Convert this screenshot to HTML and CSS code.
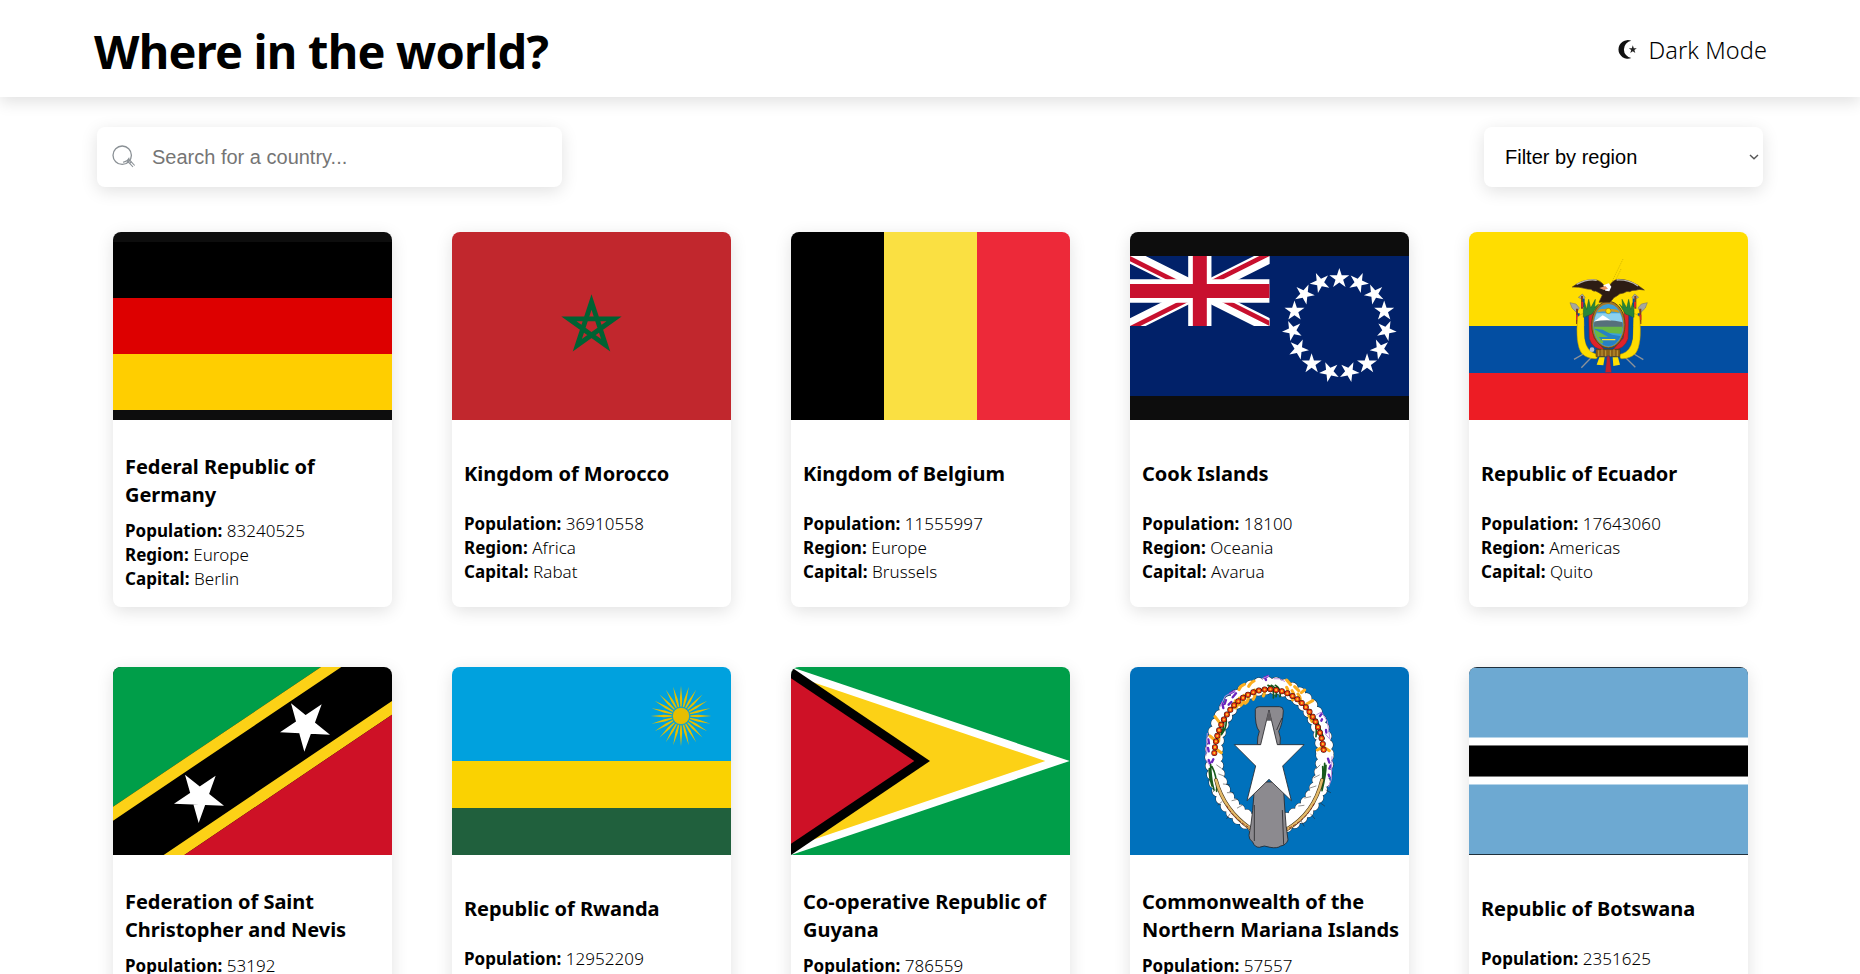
FILE: index.html
```html
<!DOCTYPE html>
<html lang="en">
<head>
<meta charset="utf-8">
<title>Where in the world?</title>
<link rel="stylesheet" href="styles.css">
</head>
<body>
<header class="header">
  <h1 class="brand">Where in the world?</h1>
  <button class="mode" type="button">
    <svg class="mode-icon" viewBox="0 0 20 20"><path d="M13.300 .8A9.300 9.300 0 1 0 13.300 18A8.700 8.700 0 0 1 13.300 .8Z" fill="#111"/><path d="M13.300 .8A9.300 9.300 0 1 0 13.300 18L12.900 17A7.900 7.900 0 1 1 12.900 1.800Z" fill="none"/><path d="M14.800 5.300l1 2.900h3l-2.400 1.800.9 2.900-2.500-1.700-2.500 1.700.9-2.900-2.400-1.800h3z" fill="#222" stroke="#fff" stroke-width=".8" paint-order="stroke"/></svg>
    <span>Dark Mode</span>
  </button>
</header>
<section class="controls">
  <label class="search">
    <svg class="search-icon" viewBox="0 0 24 24" fill="none" stroke="#8a9095"><circle cx="10.2" cy="10.2" r="9.2" stroke-width="1.3"/><path d="M11 17.2Q15.500 16.500 17.300 12.800M15.500 16.200l1.600-1.600 2.200 2.200-1.600 1.600zM17.700 18.400l3.300 3.600M19.300 16.800l3.400 3.700" stroke-width="1.100"/></svg>
    <input class="search-input" type="text" placeholder="Search for a country...">
  </label>
  <div class="region"><span>Filter by region</span><svg class="chevron" viewBox="0 0 10 6" fill="none" stroke="#555" stroke-width="1.4"><path d="M1 1l4 3.800L9 1"/></svg></div>
</section>
<main class="grid">
  <article class="card">
    <svg class="flag" viewBox="39 36 837 564" preserveAspectRatio="none"><path fill="#0d0d0d" d="M39 36h837v564H39z"/><path d="M39 66h837v168H39z"/><path fill="#d00" d="M39 234h837v168H39z"/><path fill="#ffce00" d="M39 402h837v168H39z"/></svg>
    <div class="info"><h2 class="name">Federal Republic of Germany</h2><ul class="facts"><li><b>Population:</b> 83240525</li><li><b>Region:</b> Europe</li><li><b>Capital:</b> Berlin</li></ul></div>
  </article>
  <article class="card">
    <svg class="flag" viewBox="36 36 837 564" preserveAspectRatio="none"><path fill="#c1272d" d="M36 36h837v564H36z"/><path fill="none" stroke="#006233" stroke-width="14.500" stroke-miterlimit="10" d="M454.500 246L497 376 386.500 296.500H522.500L412 376z"/></svg>
    <div class="info"><h2 class="name">Kingdom of Morocco</h2><ul class="facts"><li><b>Population:</b> 36910558</li><li><b>Region:</b> Africa</li><li><b>Capital:</b> Rabat</li></ul></div>
  </article>
  <article class="card">
    <svg class="flag" viewBox="0 0 3 2" preserveAspectRatio="none"><path d="M0 0h1v2H0z"/><path fill="#fae042" d="M1 0h1v2H1z"/><path fill="#ed2939" d="M2 0h1v2H2z"/></svg>
    <div class="info"><h2 class="name">Kingdom of Belgium</h2><ul class="facts"><li><b>Population:</b> 11555997</li><li><b>Region:</b> Europe</li><li><b>Capital:</b> Brussels</li></ul></div>
  </article>
  <article class="card">
    <svg class="flag" viewBox="30 36 837 564" preserveAspectRatio="none">
      <defs><path id="star" d="M658 144l7.100 21.800h22.900l-18.500 13.500 7.100 21.800L658 187.600l-18.600 13.500 7.100-21.800L628 165.800h22.900z"/><clipPath id="uj"><path d="M0 0h60v30H0z"/></clipPath><clipPath id="ujr"><path d="M30 15h30v15zv15H0zH0V0zV0h30z"/></clipPath></defs>
      <path fill="#0d0d0d" d="M30 36h837v564H30z"/><path fill="#012169" d="M30 108h837v420H30z"/>
      <g transform="translate(30 108) scale(6.983 7)" clip-path="url(#uj)"><path d="M0 0l60 30M60 0L0 30" stroke="#fff" stroke-width="6"/><path d="M0 0l60 30M60 0L0 30" stroke="#c8102e" stroke-width="4" clip-path="url(#ujr)"/><path d="M30 0v30M0 15h60" stroke="#fff" stroke-width="10"/><path d="M30 0v30M0 15h60" stroke="#c8102e" stroke-width="6"/></g>
      <g fill="#fff"><use href="#star"/><use href="#star" transform="rotate(24 658 317)"/><use href="#star" transform="rotate(48 658 317)"/><use href="#star" transform="rotate(72 658 317)"/><use href="#star" transform="rotate(96 658 317)"/><use href="#star" transform="rotate(120 658 317)"/><use href="#star" transform="rotate(144 658 317)"/><use href="#star" transform="rotate(168 658 317)"/><use href="#star" transform="rotate(192 658 317)"/><use href="#star" transform="rotate(216 658 317)"/><use href="#star" transform="rotate(240 658 317)"/><use href="#star" transform="rotate(264 658 317)"/><use href="#star" transform="rotate(288 658 317)"/><use href="#star" transform="rotate(312 658 317)"/><use href="#star" transform="rotate(336 658 317)"/></g>
    </svg>
    <div class="info"><h2 class="name">Cook Islands</h2><ul class="facts"><li><b>Population:</b> 18100</li><li><b>Region:</b> Oceania</li><li><b>Capital:</b> Avarua</li></ul></div>
  </article>
  <article class="card">
    <svg class="flag" viewBox="27 36 837 564" preserveAspectRatio="none">
      <path fill="#fd0" d="M27 36h837v282H27z"/><path fill="#034ea2" d="M27 318h837v141H27z"/><path fill="#ed1c24" d="M27 459h837v141H27z"/>
      <!-- lances and flags -->
      <path d="M489 117l-34 70M483 147l-20 42" stroke="#c9ab00" stroke-width="2" stroke-dasharray="4 3" fill="none"/>
      <path d="M370 402l-28 16M402 404l-38 39M522 402l28 17M488 404l38 38" stroke="#8d9299" stroke-width="4"/>
      <g fill="#a5a7a0" stroke="#6d7068" stroke-width="1.500"><path d="M355 232l12-10 8 10-6 8zM330 248l18 4 10 12-8 14-14-14zM536 232l-12-10-8 10 6 8zM562 248l-18 4-10 12 8 14 14-14z"/></g>
      <g stroke-width="6" fill="none"><path stroke="#7c3f20" d="M366 228v38M351 266v46M526 228v38M541 266v46"/><path stroke="#034ea2" d="M371 236v26M356 280v18M521 236v26M536 280v18"/><path stroke="#d7262a" d="M367 246v16M351 284v16M525 246v16M541 284v16"/></g>
      <path fill="#fd0" stroke="#b28c00" stroke-width="1.500" d="M353 290q18-14 20-6-2 72 6 92 10 24 38 28l-8 12q-26 2-44-16-20-28-12-110zM539 290q-18-14-20-6 2 72-6 92-10 24-38 28l8 12q26 2 44-16 20-28 12-110z"/>
      <path fill="#034ea2" d="M372 292l18-12v86l24 32q-34-10-40-42zM520 292l-18-12v86l-24 32q34-10 40-42z"/>
      <path fill="#e0222a" stroke="#8f1c1c" stroke-width="1.500" d="M386 274l14-8 2 88 32 36q-36-2-46-34zM506 274l-14-8-2 88-32 36q36-2 46-34z"/>
      <g fill="#28863a" stroke="#14612b" stroke-width="1.500"><path d="M370 292q-2-24 4-44l6 20 6-30 6 26 14-26-2 24 12-10-20 30zM522 292q2-24-4-44l-6 20-6-30-6 26-14-26 2 24-10-10 18 30z"/></g>
      <ellipse cx="445" cy="314" rx="50" ry="70" fill="#a3782c" stroke="#634515" stroke-width="3"/><ellipse cx="445" cy="316" rx="45" ry="64" fill="#3d9fd8"/>
      <clipPath id="shield"><ellipse cx="445" cy="316" rx="43" ry="62"/></clipPath>
      <g clip-path="url(#shield)"><path fill="#8bd1ee" d="M400 280h90v28h-90z"/><path fill="#fff" d="M400 306l12-8 16-12 8 4 26 18z"/><path fill="#56707b" d="M400 305q45-10 90 2v18h-90z"/><path fill="#69b843" d="M400 320h90v22l-48-4 18 16 28 16h-88z"/><path fill="#2681c4" d="M400 326l28 3 28 15 34 6v40h-74l14-24-14-15h28z"/><path d="M426 359h40" stroke="#ffe52d" stroke-width="4"/><path d="M408 274q37-9 76 2" fill="none" stroke="#c99a24" stroke-width="7"/></g>
      <circle cx="445" cy="273" r="8" fill="#ffe100" stroke="#9e7708" stroke-width="2"/>
      <path fill="#2d1c14" stroke="#503a20" stroke-width="2" d="M337 201q28-22 62-22 24 0 34 20h16q6-18 26-21 36-2 78 32-18-4-26 1-10-2-18 4-8-3-18 4-12 0-22 10-8 2-12 10l-8 8h-32l10-22q-10-8-20-12-8 2-14-5-10 0-20-3-16-5-36-4z"/>
      <path d="M350 193q34-17 60-12M470 180q36-2 64 18" fill="none" stroke="#b8b5b0" stroke-width="4"/><path fill="#fff" d="M430 196l16-6 8 10-6 14-12-2z"/><path fill="#e79060" d="M418 204l18-6 8 8-12 4z"/>
      <path fill="#8c6018" stroke="#44300d" stroke-width="1.500" d="M408 388h72v22h-72z"/><path d="M416 391v18M426 388v20M437 391v18M451 391v18M462 388v20M472 391v18" stroke="#c49a36" stroke-width="3"/>
      <circle cx="396" cy="389" r="7" fill="#b5bed0"/><path fill="#ffdf00" d="M418 412h16l-4 24-20-2zM458 412h16l6 22-20 4z"/><path fill="#c5202b" stroke="#293f84" stroke-width="2" d="M441 408h8l6 50h-20z"/>
    </svg>
    <div class="info"><h2 class="name">Republic of Ecuador</h2><ul class="facts"><li><b>Population:</b> 17643060</li><li><b>Region:</b> Americas</li><li><b>Capital:</b> Quito</li></ul></div>
  </article>
  <article class="card">
    <svg class="flag" viewBox="39 51 837 564" preserveAspectRatio="none"><path d="M39 51h837v564H39z"/><path fill="#009e49" d="M39 51h624L39 470z"/><path fill="#fcd116" d="M663 51h61L39 512v-42zM191 615h62L876 194v-41z"/><path fill="#ce1126" d="M253 615h623V194z"/><path fill="#fff" d="M573 160L690 254 540 247 665 163 613 305zM255 374L372 467 222 461 347 377 296 519z"/></svg>
    <div class="info"><h2 class="name">Federation of Saint Christopher and Nevis</h2><ul class="facts"><li><b>Population:</b> 53192</li></ul></div>
  </article>
  <article class="card">
    <svg class="flag" viewBox="36 51 837 564" preserveAspectRatio="none">
      <path fill="#00a1de" d="M36 51h837v282H36z"/><path fill="#fad201" d="M36 333h837v141H36z"/><path fill="#20603d" d="M36 474h837v141H36z"/>
      <defs><path id="ray" d="M723 107l3.500 40-1.500 23h-4l-1.500-23zM723 289l3.500-40-1.500-23h-4l-1.500 23z"/></defs>
      <g fill="#e5be01"><use href="#ray"/><use href="#ray" transform="rotate(15 723 198)"/><use href="#ray" transform="rotate(30 723 198)"/><use href="#ray" transform="rotate(45 723 198)"/><use href="#ray" transform="rotate(60 723 198)"/><use href="#ray" transform="rotate(75 723 198)"/><use href="#ray" transform="rotate(90 723 198)"/><use href="#ray" transform="rotate(105 723 198)"/><use href="#ray" transform="rotate(120 723 198)"/><use href="#ray" transform="rotate(135 723 198)"/><use href="#ray" transform="rotate(150 723 198)"/><use href="#ray" transform="rotate(165 723 198)"/><circle cx="723" cy="198" r="26" stroke="#1fa3bd" stroke-width="3"/></g>
    </svg>
    <div class="info"><h2 class="name">Republic of Rwanda</h2><ul class="facts"><li><b>Population:</b> 12952209</li></ul></div>
  </article>
  <article class="card">
    <svg class="flag" viewBox="33 51 837 564" preserveAspectRatio="none"><path fill="#009e49" d="M33 51h837v564H33z"/><path fill="#fff" d="M33 51l836 282L33 615z"/><path fill="#fcd116" d="M33 74l763 259L33 592z"/><path d="M33 51l417 282L33 615z"/><path fill="#ce1126" d="M33 85l370 248L33 581z"/></svg>
    <div class="info"><h2 class="name">Co-operative Republic of Guyana</h2><ul class="facts"><li><b>Population:</b> 786559</li></ul></div>
  </article>
  <article class="card">
    <svg class="flag" viewBox="30 51 837 564" preserveAspectRatio="none">
      <path fill="#0071bc" d="M30 51h837v564H30z"/>
      <!-- wreath -->
      <g fill="none" stroke-linecap="round">
        <g stroke="#20303f"><ellipse cx="448" cy="318" rx="177" ry="222" stroke-width="35" stroke-dasharray="0 26"/><ellipse cx="448" cy="316" rx="155" ry="198" stroke-width="33" stroke-dasharray="0 25"/></g>
        <g stroke="#fff"><ellipse cx="448" cy="318" rx="177" ry="222" stroke-width="32" stroke-dasharray="0 26"/><ellipse cx="448" cy="316" rx="155" ry="198" stroke-width="30" stroke-dasharray="0 25"/><ellipse cx="448" cy="317" rx="166" ry="210" stroke-width="34"/></g>
        <path stroke="#222" stroke-width="1.500" d="M290 345l14 10M296 372l16 6M310 402l18 2M322 428l18 0M336 452l16-4M352 474l14-8M600 345l-12 12M598 375l-16 8M588 408l-18 6M572 440l-18 4M552 466l-16 2M276 385l-12 6M286 420l-10 8M306 455l-12 10M330 492l-10 14M618 420l14 8M600 458l14 10M572 492l12 14M544 514l8 14"/>
        <g stroke="#fcae1f" stroke-width="9"><path d="M332 178q12-8 14-26M346 174q12-10 12-30M362 166q12-10 10-30M376 160q12-8 8-28M400 148q8-10 4-28M430 138q6-8 2-20M357 119q4-12 16-16M386 109q4-10 16-16M285 200l14 18M270 258l16 14M292 300l12 8M500 112q8 12-2 20M516 122q10 14 2 28M534 132q12 14 4 26M500 90l12 14M524 110l12 12M544 128l10-8M560 162l18-10M566 196l10 18M592 300l14-8M612 292l16 10M298 250l-2 24"/></g>
        <g stroke="#6a25bd" stroke-width="7"><path d="M306 158l4 16M318 150l-4 12M330 130l12-6M338 142l10-12M326 164l8-8M434 82l4 8M444 78l-6 4M600 198l6-8M604 212l2-4M618 240l1 8M265 268l2 12M264 294l2 10M266 330l4 10M280 328l-4 8M624 326l4 12M632 346l-4 10M626 374l2 6"/></g>
        <g stroke="#b98ddd" stroke-width="3"><path d="M300 170l16-32 30-16M426 86l20-8M462 86q18-4 32 8M590 194l14-8 18 28 8 54-14-16M262 250l-4 66M258 330l14 20M636 320l-2 68-8 22"/></g>
        <g stroke="#175a1c" stroke-width="5"><path d="M318 206q4 26-14 48M310 210q4 18-6 42M444 106q20 6 16 38M454 106q18 8 14 34M466 106q18 10 14 34M580 194q12 20 8 66M590 208q8 24 22 58M272 344q0 40 10 76M276 350q16 30 14 74M268 356q-2 24 8 52M614 340q0 40-10 76M618 346q0 26-12 76M608 350q2 24-2 50"/></g>
        <path d="M283 309A165 210 0 0 1 612 315" stroke="#301507" stroke-width="18" stroke-dasharray="0 17.500"/><path d="M283 309A165 210 0 0 1 612 315" stroke="#e53410" stroke-width="15" stroke-dasharray="0 17.500"/><path d="M283 309A165 210 0 0 1 612 315" stroke="#ffc126" stroke-width="7" stroke-dasharray="0 17.500"/>
        <path d="M288 390Q312 480 392 536M606 390Q582 490 500 538" stroke="#423014" stroke-width="11"/><path d="M288 390Q312 480 392 536M606 390Q582 490 500 538" stroke="#e3b968" stroke-width="8"/><path d="M320 468Q342 506 392 536M582 462Q556 512 500 538" stroke="#8b2c16" stroke-width="3" stroke-dasharray="7 7"/>
      </g>
      <g fill="#8c8a8f" stroke="#28282b" stroke-width="2.500"><path d="M412 284q0-26 6-40-14-16-12-66 2-8 12-8h60q12 0 12 12-2 40-14 62 8 20 4 40z"/><path d="M387 556q14-70 16-160h86l6 90q2 40 9 84-6 16-22 18-10 8-32 4-18-8-32 0-14 0-20-16-12-8-11-20zM403 465v108M487 480l4 104M470 240l16-36" /></g>
      <path fill="#fff" stroke="#28282b" stroke-width="2.500" d="M447 180l25 104h80l-64 64 26 104-67-64-66 64 26-104-64-64h79z"/><path fill="#5e5c60" d="M447 180l8 32h-16z"/>
    </svg>
    <div class="info"><h2 class="name">Commonwealth of the Northern Mariana Islands</h2><ul class="facts"><li><b>Population:</b> 57557</li></ul></div>
  </article>
  <article class="card">
    <svg class="flag" viewBox="27 51 837 564" preserveAspectRatio="none"><path fill="#20303c" d="M27 51h837v564H27z"/><path fill="#6da9d2" d="M27 54h837v558H27z"/><path fill="#b5d4e9" d="M27 261h837v144H27z"/><path fill="#fff" d="M27 264h837v138H27z"/><path fill="#777" d="M27 285h837v96H27z"/><path d="M27 288h837v90H27z"/></svg>
    <div class="info"><h2 class="name">Republic of Botswana</h2><ul class="facts"><li><b>Population:</b> 2351625</li></ul></div>
  </article>
</main>
</body>
</html>
```
FILE: styles.css
```css
* { box-sizing: border-box; margin: 0; padding: 0; }

html { overflow: hidden; }

body {
  height: 974px;
  overflow: hidden;
  background: #fff;
  color: #000;
  font-family: "Noto Sans", "Open Sans", sans-serif;
}

.header {
  display: flex;
  align-items: center;
  justify-content: space-between;
  height: 97px;
  padding: 0 93px 0 94px;
  background: #fff;
  box-shadow: 0 5px 15px rgba(0, 0, 0, .12);
}

.brand { padding-top: 4px; font-size: 47px; line-height: 64px; font-weight: 700; letter-spacing: -.8px; }

.mode {
  display: flex;
  align-items: center;
  gap: 10px;
  padding-top: 2px;
  border: 0;
  background: none;
  font: 350 23.5px/32px "Noto Sans", sans-serif;
  letter-spacing: .1px;
  color: #000;
}

.mode-icon { width: 20px; height: 20px; }

.controls {
  display: flex;
  justify-content: space-between;
  padding: 30px 97px 0;
}

.search, .region {
  display: flex;
  align-items: center;
  height: 60px;
  border-radius: 8px;
  background: #fff;
  box-shadow: 0 4px 17px rgba(0, 0, 0, .12);
  font: 20px "Liberation Sans", sans-serif;
}

.search { width: 465px; padding-left: 15px; }
.search-icon { width: 24px; height: 24px; flex: none; }
.search-input { width: 380px; margin-left: 16px; border: 0; outline: 0; background: none; font: inherit; }
.search-input::placeholder { color: #757575; }

.region { width: 279px; padding: 0 4px 0 21px; justify-content: space-between; }
.chevron { width: 10px; height: 6px; }

.grid {
  display: grid;
  grid-template-columns: repeat(5, 279px);
  gap: 60px;
  padding: 45px 112px 0 113px;
}

.card {
  height: 375px;
  display: flex;
  flex-direction: column;
  border-radius: 8px;
  background: #fff;
  box-shadow: 0 4px 17px rgba(0, 0, 0, .12);
}

.flag { display: block; width: 279px; height: 188px; flex: none; border-radius: 8px 8px 0 0; }

.info {
  flex: 1;
  display: flex;
  flex-direction: column;
  justify-content: space-around;
  padding: 28px 8px 11px 12px;
}

.name { font-size: 20px; line-height: 28px; font-weight: 700; letter-spacing: -.03px; }
.facts { min-height: 72px; list-style: none; font-size: 17px; line-height: 24px; font-weight: 300; letter-spacing: .05px; }
.facts b { font-weight: 700; letter-spacing: .02px; }
```
